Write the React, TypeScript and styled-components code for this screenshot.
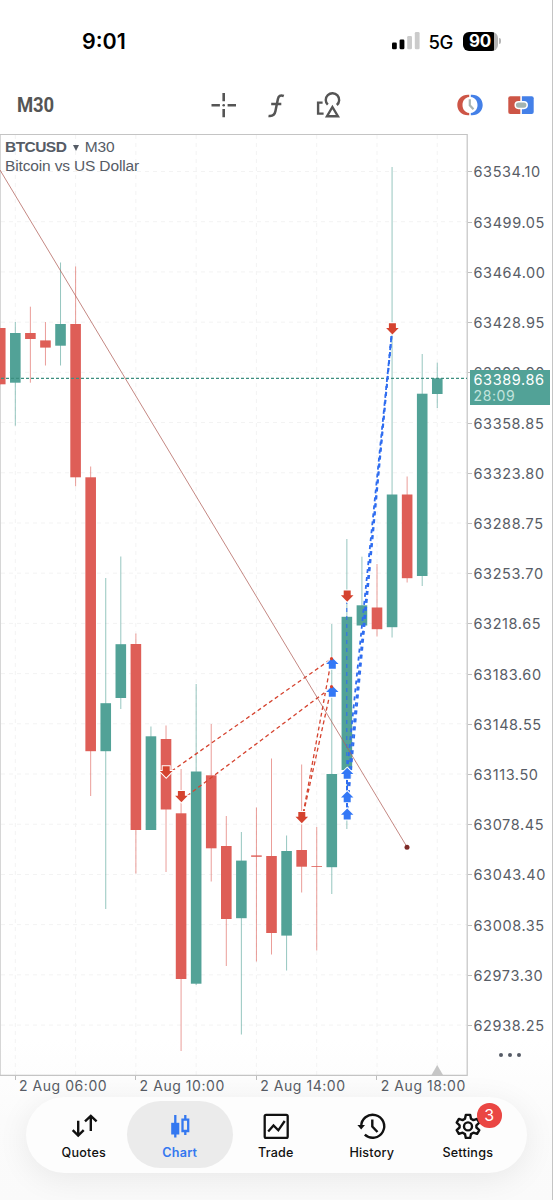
import React from "react";
import styled, { createGlobalStyle } from "styled-components";

const GlobalStyle = createGlobalStyle`
  * { box-sizing: border-box; }
  body { margin: 0; background: #fff; font-family: Inter, "Liberation Sans", sans-serif; }
`;

const Screen = styled.main`
  width: 553px;
  height: 1200px;
  display: flex;
  flex-direction: column;
  overflow: hidden;
  background: linear-gradient(#fff 0 1040px, #fbfbfb 1120px, #fafafa);
  border-right: 1px solid #c4c4c4;
`;

const StatusBar = styled.header`
  height: 82px;
  flex: none;
  display: flex;
  align-items: center;
  padding: 0 51px 0 82px;
  color: #000;
`;

const Clock = styled.span`
  font-size: 21.5px;
  font-weight: 600;
  letter-spacing: 0;
  margin-right: auto;
`;

const Network = styled.span`
  font-size: 18.5px;
  font-weight: 500;
  letter-spacing: -0.4px;
  margin: 1px 10px 0 9px;
`;

const Battery = styled.div`
  width: 35px;
  height: 19px;
  border-radius: 6px;
  background: linear-gradient(90deg, #000 0 31px, #b5b5b5 31px);
  color: #fff;
  font-size: 17px;
  font-weight: 700;
  line-height: 19px;
  padding-left: 6px;
  letter-spacing: -0.2px;
`;

const BatteryNub = styled.i`
  width: 2px;
  height: 6px;
  margin-left: 1px;
  border-radius: 0 2px 2px 0;
  background: #b5b5b5;
`;

const Toolbar = styled.div`
  height: 52px;
  flex: none;
  display: flex;
  align-items: center;
  padding: 0 17px 6px 16.5px;
`;

const Timeframe = styled.span`
  width: 193.5px;
  flex: none;
  font: 700 21px Roboto, sans-serif;
  color: #555;
  letter-spacing: -0.1px;

  span {
    display: inline-block;
    transform: scaleX(0.88);
    transform-origin: left;
  }
`;

const ToolIcon = styled.svg<{ $gap?: number }>`
  width: 28px;
  height: 28px;
  flex: none;
  display: block;
  margin-left: ${(p) => p.$gap ?? 0}px;
`;

const ChartRow = styled.section`
  height: 942px;
  flex: none;
  display: flex;
`;

const Plot = styled.div`
  width: 468px;
  height: 942px;
  position: relative;
`;

const PlotSvg = styled.svg`
  display: block;
  width: 468px;
  height: 942px;
`;

const Legend = styled.div`
  position: absolute;
  top: 4px;
  left: 5px;
  font: 15.5px/18.5px "Liberation Sans", sans-serif;
  letter-spacing: -0.15px;
  color: #565c66;
`;

const SymbolRow = styled.div`
  display: flex;
  align-items: center;
`;

const SymbolName = styled.span`
  font-weight: 700;
  letter-spacing: -0.55px;
`;

const Caret = styled.i`
  margin: 1px 6px 0 6.5px;
  border: 3px solid transparent;
  border-top: 6px solid #565c66;
  border-bottom: 0;
`;

const PriceAxis = styled.div`
  flex: 1;
  position: relative;
  padding-top: 12.9px;
`;

const PriceLabel = styled.div`
  height: 50.21px;
  display: flex;
  align-items: center;
  font-size: 14.5px;
  letter-spacing: 0.6px;
  color: #585d66;

  &::before {
    content: "";
    width: 4px;
    height: 1px;
    margin-right: 1.5px;
    background: #c0c0c0;
  }
`;

const PriceTag = styled.div`
  position: absolute;
  left: 2px;
  top: 235.5px;
  width: 80px;
  height: 35px;
  padding: 1px 0 0 3.5px;
  background: #52a297;
  color: #fff;
  font-size: 14.5px;
  line-height: 17px;
  letter-spacing: 0.6px;
`;

const Countdown = styled.div`
  font-size: 14px;
  line-height: 15px;
  letter-spacing: 0.6px;
  color: #c2e4de;
`;

const MoreDots = styled.div`
  position: absolute;
  left: 31px;
  top: 919px;
  display: flex;
  gap: 4.7px;
`;

const Dot = styled.i`
  width: 4.3px;
  height: 4.3px;
  border-radius: 50%;
  background: #555b66;
`;

const TimeAxis = styled.div`
  height: 21px;
  flex: none;
  display: flex;
  padding-left: 14.5px;
`;

const TimeLabel = styled.div`
  width: 120.6px;
  flex: none;
  font-size: 14px;
  line-height: 20px;
  letter-spacing: 0.55px;
  color: #585d66;
  display: flex;
  white-space: nowrap;

  &::before {
    content: "";
    width: 1px;
    height: 4px;
    margin-right: 3.5px;
    background: #bdbdbd;
  }
`;

const TabBar = styled.nav`
  width: 501px;
  height: 76px;
  margin-left: 26px;
  flex: none;
  display: flex;
  justify-content: center;
  align-items: flex-start;
  padding: 4px 1.4px 0 0;
  border-radius: 38px;
  background: #fdfdfd;
  box-shadow: 0 6px 32px rgba(0, 0, 0, 0.075);
`;

const Tab = styled.div<{ $active?: boolean }>`
  width: 106px;
  height: 67px;
  margin: 0 -5px;
  flex: none;
  display: flex;
  flex-direction: column;
  align-items: center;
  padding-top: 8.5px;
  border-radius: 34px;
  background: ${(p) => (p.$active ? "#ebebeb" : "transparent")};
  color: ${(p) => (p.$active ? "#3478f0" : "#111")};
  font-size: 12.6px;
  font-weight: ${(p) => (p.$active ? 600 : 500)};
  letter-spacing: 0.2px;
  line-height: 16px;
`;

const IconSlot = styled.div`
  position: relative;
  height: 35.5px;
`;

const TabIcon = styled.svg`
  display: block;
  width: 32px;
  height: 32px;
`;

const Badge = styled.span`
  position: absolute;
  left: 25.3px;
  top: -6.5px;
  width: 24.5px;
  height: 24.5px;
  border-radius: 50%;
  background: #ea4643;
  color: #fff;
  font-size: 16px;
  font-weight: 400;
  line-height: 24px;
  text-align: center;
`;

const RED = "#de5e57";
const GREEN = "#52a297";
const SELL = "#d5432f";
const BUY = "#3478f6";
const FIRST_X = 0.25;
const STEP = 15.07;

// high, body top, body bottom, low, rising
type Candle = [number, number, number, number, boolean];
const candles: Candle[] = [
  [328, 328, 384.3, 384.3, false],
  [322, 333, 382.7, 425.7, true],
  [306.7, 333, 339, 382.7, false],
  [322, 340.4, 347.6, 365.5, false],
  [262.5, 324, 345.7, 365.5, true],
  [266.5, 324, 477.3, 486.3, false],
  [466.5, 477.3, 751.2, 796, false],
  [578, 703.2, 751.2, 909, true],
  [556.5, 644.2, 698, 709, true],
  [633.5, 644, 830, 873.5, false],
  [726.5, 736.3, 830, 830, true],
  [725.5, 739, 809.5, 872, false],
  [769, 813.3, 979, 1051, false],
  [684, 771.5, 983.7, 985, true],
  [724, 775.3, 848.3, 881.5, false],
  [816, 846, 919, 966, false],
  [832, 860.6, 918.2, 1034.5, true],
  [807.5, 855.4, 856.8, 961.5, false],
  [758.5, 856, 933, 954.5, false],
  [835.5, 851, 935.6, 970.5, true],
  [764.5, 850, 866.7, 892.5, false],
  [827, 866, 866.8, 950.5, false],
  [624, 774, 867.2, 894, true],
  [539, 616.8, 770, 829, true],
  [556.7, 605.3, 625.5, 625.5, true],
  [564, 607.5, 629.2, 636.5, false],
  [167, 494.5, 627.2, 637.5, true],
  [476.5, 494.5, 578.2, 582.5, false],
  [354, 393.7, 576, 586, true],
  [362.7, 378.3, 394, 408, true],
];

const prices = [
  "63534.10", "63499.05", "63464.00", "63428.95", "63393.90", "63358.85",
  "63323.80", "63288.75", "63253.70", "63218.65", "63183.60", "63148.55",
  "63113.50", "63078.45", "63043.40", "63008.35", "62973.30", "62938.25",
];

const times = ["2 Aug 06:00", "2 Aug 10:00", "2 Aug 14:00", "2 Aug 18:00"];

const sells = [[166.2, 766.3], [181.4, 791], [301.8, 812], [347.2, 590.5], [392.4, 323.2]];
const buys = [[332.3, 657.8], [332.3, 685.8], [347.2, 767.8], [347.2, 791.3], [347.2, 808.5]];

function Plotted() {
  return (
    <PlotSvg viewBox="0 134 468 942">
      <g stroke="#f3f3f3" strokeWidth="1" strokeDasharray="4 4">
        {prices.map((p, i) => (
          <path key={p} d={`M1 ${171.5 + i * 50.21}H467`} />
        ))}
        {[0, 1, 2, 3, 4, 5, 6, 7].map((i) => (
          <path key={i} d={`M${15.3 + i * 60.28} 135V1075`} />
        ))}
      </g>
      <path d="M0.5 134V1075" stroke="#d6d6d6" />
      <path d="M0 134.3H467.2V1075.3H0" fill="none" stroke="#c4c4c4" strokeWidth="1.2" />
      <path d="M431.5 1075 437.2 1065 443 1075Z" fill="#c6c6c6" />
      {candles.map(([high, top, bottom, low, up], i) => {
        const x = FIRST_X + i * STEP;
        const color = up ? GREEN : RED;
        return (
          <g key={i}>
            <path d={`M${x} ${high}V${low}`} stroke={color} strokeWidth="1" opacity="0.6" />
            <rect x={x - 5.3} y={top} width="10.6" height={bottom - top} fill={color} />
          </g>
        );
      })}
      <path d="M1 378.4H467" stroke="#3c8f80" strokeWidth="1.1" strokeDasharray="3 2" />
      <g fill="none" stroke={SELL} strokeWidth="1.3" strokeDasharray="4 3">
        <path d="M166 775 332 658.5" />
        <path d="M181.5 800 332 687" />
        <path d="M302 820 331.5 659" />
        <path d="M302 820 331.5 687" />
      </g>
      <g fill="none" stroke="#2f6df0" strokeWidth="1.8" strokeDasharray="4 4">
        <path d="M346.8 600V768" strokeWidth="1" />
        <path d="M347 772 392 331" />
        <path d="M347 795 392 331" strokeDashoffset="-1" />
        <path d="M347 813 392 331" strokeDashoffset="-3" />
      </g>
      {sells.map(([x, y]) => (
        <path
          key={`${x}`}
          d={`M${x - 3.5} ${y}h7v4.8h2.8l-6.3 6.4l-6.3 -6.4h2.8z`}
          fill={SELL}
          stroke="#fff"
          strokeWidth="2"
          paintOrder="stroke"
        />
      ))}
      {buys.map(([x, y]) => (
        <path
          key={`${x}-${y}`}
          d={`M${x} ${y}l6.2 6.2h-2.7v4.8h-7v-4.8h-2.7z`}
          fill={BUY}
          stroke="#fff"
          strokeWidth="2"
          paintOrder="stroke"
        />
      ))}
      <path d="M347 780V790M347 803V808" stroke="#2f6df0" strokeWidth="2" strokeDasharray="4 2" />
      <g fill={SELL}>
        <circle cx="331.5" cy="658.7" r="1.6" />
        <circle cx="331.5" cy="686.7" r="1.6" />
      </g>
      <path d="M0 170 407 847" stroke="#b0605a" strokeWidth="0.75" />
      <circle cx="407" cy="847.2" r="2.5" fill="#7d2a27" />
    </PlotSvg>
  );
}

function QuotesIcon() {
  return (
    <TabIcon viewBox="0 0 32 32" fill="none" stroke="currentColor" strokeWidth="2.4">
      <path d="M10.2 10.8V25M4.7 20.1l5.5 5.5 5.500-5.500M22.800 21V6.500M17 11.300l5.800-5.500 5.800 5.500" />
    </TabIcon>
  );
}

function CandlesIcon() {
  return (
    <TabIcon viewBox="0 0 32 32" fill="none" stroke="currentColor" strokeWidth="2.3">
      <path d="M11.3 5V27.600M21.300 5V9M21.300 21V25" />
      <path d="M7.200 12.800H15.300V24.500H7.200z" fill="currentColor" stroke="none" />
      <path d="M18.500 9.700H24.200V21H18.500z" />
    </TabIcon>
  );
}

function TradeIcon() {
  return (
    <TabIcon viewBox="0 0 32 32" fill="none" stroke="currentColor" strokeWidth="2.3">
      <rect x="4.700" y="4.800" width="23" height="23" rx="1.400" />
      <path d="M8.200 21.500 13.500 15.500 18.300 20.300 24.700 11" />
    </TabIcon>
  );
}

function HistoryIcon() {
  return (
    <TabIcon viewBox="0 0 32 32" fill="none" stroke="currentColor" strokeWidth="2.4">
      <path d="M5.200 16.500A11.500 11.500 0 1 1 8.800 24.600" />
      <path d="M1.400 15H9L5.200 19.400Z" fill="currentColor" stroke="none" />
      <path d="M16.300 9.500V16.500L21.500 22" />
    </TabIcon>
  );
}

function GearIcon() {
  return (
    <TabIcon viewBox="0 0 32 32" fill="none" stroke="currentColor" strokeWidth="2.4" strokeLinejoin="round">
      <path d="M13.800 4.900h4.400l.8 3.800 2.400 1.400 3.700-1.200 2.200 3.800-2.900 2.600v2.200l2.900 2.600-2.200 3.800-3.700-1.200-2.400 1.400-.8 3.800h-4.400l-.8-3.800-2.400-1.400-3.700 1.200-2.200-3.800 2.900-2.600v-2.200l-2.900-2.600 2.200-3.800 3.700 1.200 2.400-1.400z" />
      <circle cx="16" cy="16.400" r="4" />
    </TabIcon>
  );
}

const tabs = [
  { name: "Quotes", Icon: QuotesIcon },
  { name: "Chart", Icon: CandlesIcon, active: true },
  { name: "Trade", Icon: TradeIcon },
  { name: "History", Icon: HistoryIcon },
  { name: "Settings", Icon: GearIcon, badge: 3 },
];

const SignalIcon = styled.svg`
  width: 28px;
  height: 18px;
`;

export default function App() {
  return (
    <Screen>
      <GlobalStyle />
      <StatusBar>
        <Clock>9:01</Clock>
        <SignalIcon viewBox="0 0 28 18">
          <rect x="0" y="10.5" width="4.8" height="6.7" rx="1.3" />
          <rect x="7.6" y="7.5" width="4.8" height="9.7" rx="1.3" />
          <rect x="15.2" y="4" width="4.8" height="13.2" rx="1.3" fill="#cbcbcb" />
          <rect x="22.8" y="0" width="4.8" height="17.2" rx="1.3" fill="#cbcbcb" />
        </SignalIcon>
        <Network>5G</Network>
        <Battery>90</Battery>
        <BatteryNub />
      </StatusBar>

      <Toolbar>
        <Timeframe>
          <span>M30</span>
        </Timeframe>
        <ToolIcon viewBox="0 0 28 28" fill="none" stroke="#555" strokeWidth="2.6">
          <path d="M13.7 2V10.2M13.7 18V26.3M1.5 14.200H9.900M17.600 14.200H26" />
          <circle cx="13.700" cy="14.200" r="1.3" fill="#555" stroke="none" />
        </ToolIcon>
        <ToolIcon $gap={24} viewBox="0 0 28 28" fill="none" stroke="#555" strokeWidth="2.5">
          <path d="M21.8 5C18.400 3.600 16.500 5 15.900 8L13.400 20.300C12.700 24 10.600 25.500 6.500 24.900M9.200 13H19.300" />
        </ToolIcon>
        <ToolIcon $gap={24} viewBox="0 0 28 28" fill="none" stroke="#555" strokeWidth="2.4">
          <path d="M8.600 11.600H4.100V22.600H9.600" />
          <path d="M13.800 13.700A6.700 6.700 0 1 1 22.800 14" />
          <path d="M18.400 16 13 25.200H23.900Z" />
        </ToolIcon>
        <ToolIcon $gap={114} viewBox="0 0 28 28">
          <path d="M13.200 3.800H12C5.500 3.800 1.300 8.500 1.300 14S5.500 24.200 12 24.200H13.200V22C8.800 21.500 6.500 18 6.500 14S8.800 6.500 13.200 6Z" fill="#cd5546" />
          <path d="M14.800 3.800H16C22.500 3.800 26.700 8.500 26.700 14S22.500 24.200 16 24.200H14.800V22C19.200 21.500 21.500 18 21.500 14S19.200 6.500 14.800 6Z" fill="#4480e8" />
          <path d="M13.800 8.200V14.200L17.500 18.200" fill="none" stroke="#a9b4b2" strokeWidth="2.2" />
        </ToolIcon>
        <ToolIcon $gap={23} viewBox="0 0 28 28">
          <path d="M13.300 5.300H3.300A2 2 0 0 0 1.300 7.300V21A2 2 0 0 0 3.300 23H13.300Z" fill="#cd5546" />
          <path d="M14.900 5.300H24.700A2 2 0 0 1 26.700 7.300V21A2 2 0 0 1 24.700 23H14.900Z" fill="#4480e8" />
          <rect x="8.200" y="10.800" width="12" height="6.600" rx="3.300" fill="#a3b3b0" stroke="#fff" strokeWidth="1.500" />
        </ToolIcon>
      </Toolbar>

      <ChartRow>
        <Plot>
          <Plotted />
          <Legend>
            <SymbolRow>
              <SymbolName>BTCUSD</SymbolName>
              <Caret />
              <span>M30</span>
            </SymbolRow>
            <div>Bitcoin vs US Dollar</div>
          </Legend>
        </Plot>
        <PriceAxis>
          {prices.map((p) => (
            <PriceLabel key={p}>{p}</PriceLabel>
          ))}
          <PriceTag>
            63389.86
            <Countdown>28:09</Countdown>
          </PriceTag>
          <MoreDots>
            <Dot />
            <Dot />
            <Dot />
          </MoreDots>
        </PriceAxis>
      </ChartRow>

      <TimeAxis>
        {times.map((t) => (
          <TimeLabel key={t}>{t}</TimeLabel>
        ))}
      </TimeAxis>

      <TabBar>
        {tabs.map(({ name, Icon, active, badge }) => (
          <Tab key={name} $active={active}>
            <IconSlot>
              <Icon />
              {badge && <Badge>{badge}</Badge>}
            </IconSlot>
            {name}
          </Tab>
        ))}
      </TabBar>
    </Screen>
  );
}
